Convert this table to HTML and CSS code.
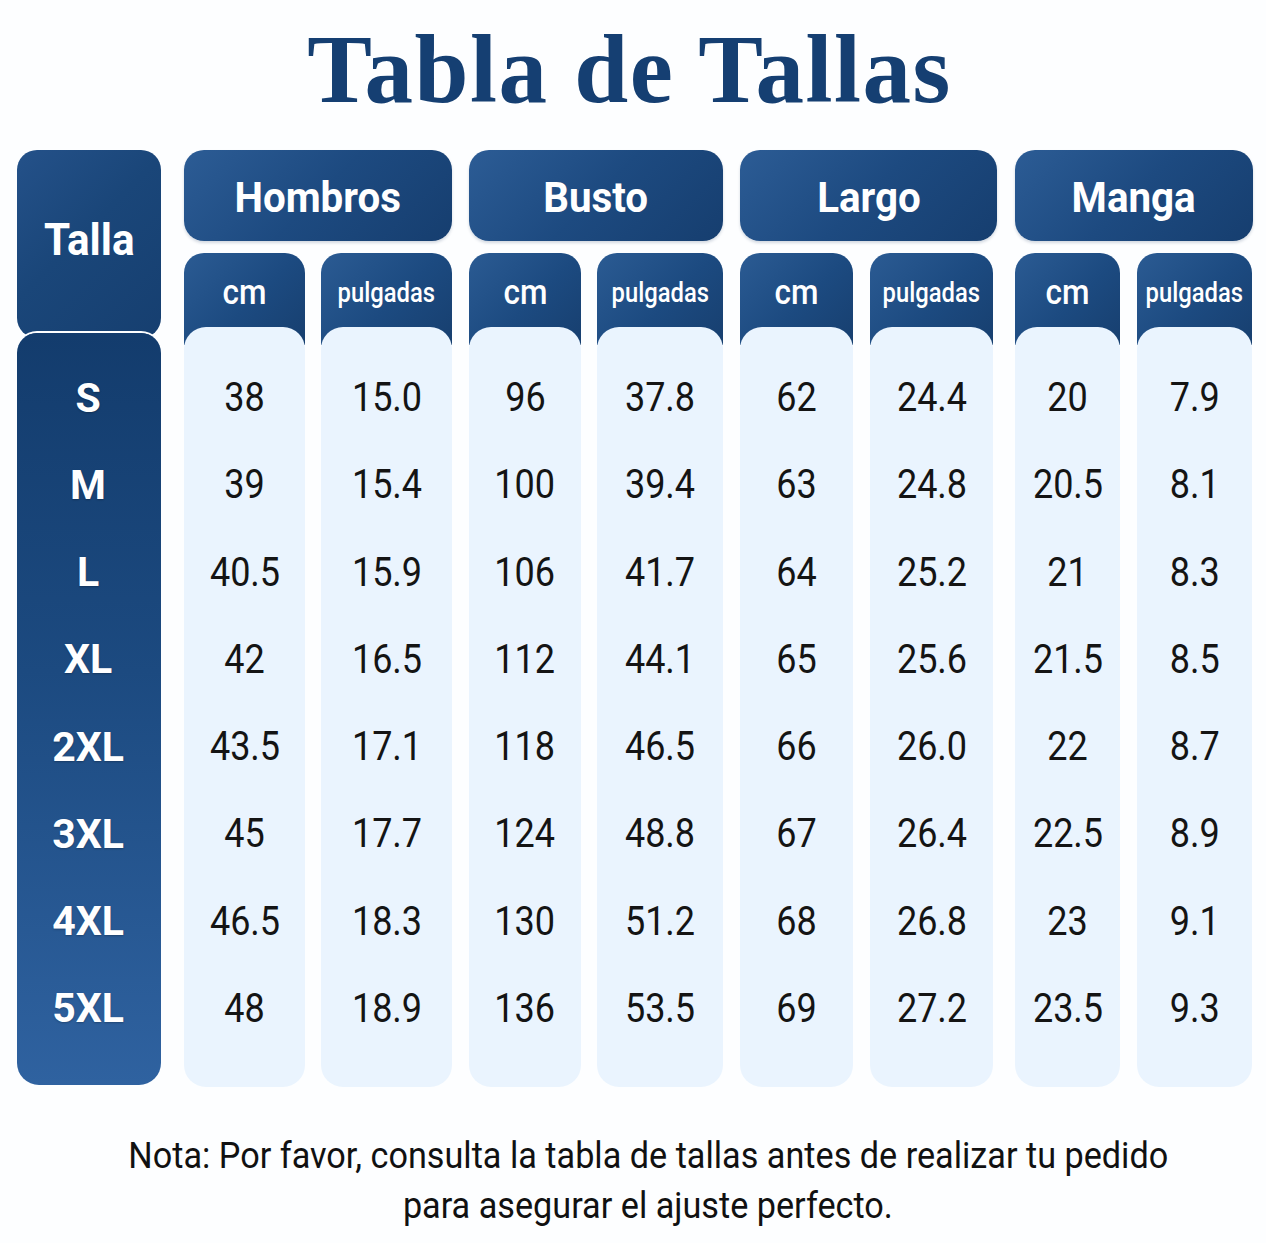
FILE: index.html
```html
<!DOCTYPE html>
<html lang="es">
<head>
<meta charset="utf-8">
<title>Tabla de Tallas</title>
<link rel="stylesheet" href="styles.css">
</head>
<body>
<div class="page">
  <h1 class="title">Tabla de Tallas</h1>
  <div class="chart">
    <div class="talla-col">
      <div class="talla-head"><span class="t sq">Talla</span></div>
      <div class="sizes">
        <div class="size">S</div>
        <div class="size">M</div>
        <div class="size">L</div>
        <div class="size">XL</div>
        <div class="size">2XL</div>
        <div class="size">3XL</div>
        <div class="size">4XL</div>
        <div class="size">5XL</div>
      </div>
    </div>

    <div class="group g-hombros">
      <div class="group-head"><span class="t sq">Hombros</span></div>
      <div class="subs">
        <div class="sub w-hc">
          <div class="sub-head"><span class="t cm">cm</span></div>
          <div class="sub-body">
            <div class="cell"><span class="t">38</span></div>
            <div class="cell"><span class="t">39</span></div>
            <div class="cell"><span class="t">40.5</span></div>
            <div class="cell"><span class="t">42</span></div>
            <div class="cell"><span class="t">43.5</span></div>
            <div class="cell"><span class="t">45</span></div>
            <div class="cell"><span class="t">46.5</span></div>
            <div class="cell"><span class="t">48</span></div>
          </div>
        </div>
        <div class="sub w-hp">
          <div class="sub-head"><span class="t pul">pulgadas</span></div>
          <div class="sub-body">
            <div class="cell"><span class="t">15.0</span></div>
            <div class="cell"><span class="t">15.4</span></div>
            <div class="cell"><span class="t">15.9</span></div>
            <div class="cell"><span class="t">16.5</span></div>
            <div class="cell"><span class="t">17.1</span></div>
            <div class="cell"><span class="t">17.7</span></div>
            <div class="cell"><span class="t">18.3</span></div>
            <div class="cell"><span class="t">18.9</span></div>
          </div>
        </div>
      </div>
    </div>

    <div class="group g-busto">
      <div class="group-head"><span class="t sq">Busto</span></div>
      <div class="subs">
        <div class="sub w-bc">
          <div class="sub-head"><span class="t cm">cm</span></div>
          <div class="sub-body">
            <div class="cell"><span class="t">96</span></div>
            <div class="cell"><span class="t">100</span></div>
            <div class="cell"><span class="t">106</span></div>
            <div class="cell"><span class="t">112</span></div>
            <div class="cell"><span class="t">118</span></div>
            <div class="cell"><span class="t">124</span></div>
            <div class="cell"><span class="t">130</span></div>
            <div class="cell"><span class="t">136</span></div>
          </div>
        </div>
        <div class="sub w-bp">
          <div class="sub-head"><span class="t pul">pulgadas</span></div>
          <div class="sub-body">
            <div class="cell"><span class="t">37.8</span></div>
            <div class="cell"><span class="t">39.4</span></div>
            <div class="cell"><span class="t">41.7</span></div>
            <div class="cell"><span class="t">44.1</span></div>
            <div class="cell"><span class="t">46.5</span></div>
            <div class="cell"><span class="t">48.8</span></div>
            <div class="cell"><span class="t">51.2</span></div>
            <div class="cell"><span class="t">53.5</span></div>
          </div>
        </div>
      </div>
    </div>

    <div class="group g-largo">
      <div class="group-head"><span class="t sq">Largo</span></div>
      <div class="subs">
        <div class="sub w-lc">
          <div class="sub-head"><span class="t cm">cm</span></div>
          <div class="sub-body">
            <div class="cell"><span class="t">62</span></div>
            <div class="cell"><span class="t">63</span></div>
            <div class="cell"><span class="t">64</span></div>
            <div class="cell"><span class="t">65</span></div>
            <div class="cell"><span class="t">66</span></div>
            <div class="cell"><span class="t">67</span></div>
            <div class="cell"><span class="t">68</span></div>
            <div class="cell"><span class="t">69</span></div>
          </div>
        </div>
        <div class="sub w-lp">
          <div class="sub-head"><span class="t pul">pulgadas</span></div>
          <div class="sub-body">
            <div class="cell"><span class="t">24.4</span></div>
            <div class="cell"><span class="t">24.8</span></div>
            <div class="cell"><span class="t">25.2</span></div>
            <div class="cell"><span class="t">25.6</span></div>
            <div class="cell"><span class="t">26.0</span></div>
            <div class="cell"><span class="t">26.4</span></div>
            <div class="cell"><span class="t">26.8</span></div>
            <div class="cell"><span class="t">27.2</span></div>
          </div>
        </div>
      </div>
    </div>

    <div class="group g-manga">
      <div class="group-head"><span class="t sq">Manga</span></div>
      <div class="subs">
        <div class="sub w-mc">
          <div class="sub-head"><span class="t cm">cm</span></div>
          <div class="sub-body">
            <div class="cell"><span class="t">20</span></div>
            <div class="cell"><span class="t">20.5</span></div>
            <div class="cell"><span class="t">21</span></div>
            <div class="cell"><span class="t">21.5</span></div>
            <div class="cell"><span class="t">22</span></div>
            <div class="cell"><span class="t">22.5</span></div>
            <div class="cell"><span class="t">23</span></div>
            <div class="cell"><span class="t">23.5</span></div>
          </div>
        </div>
        <div class="sub w-mp">
          <div class="sub-head"><span class="t pul">pulgadas</span></div>
          <div class="sub-body">
            <div class="cell"><span class="t">7.9</span></div>
            <div class="cell"><span class="t">8.1</span></div>
            <div class="cell"><span class="t">8.3</span></div>
            <div class="cell"><span class="t">8.5</span></div>
            <div class="cell"><span class="t">8.7</span></div>
            <div class="cell"><span class="t">8.9</span></div>
            <div class="cell"><span class="t">9.1</span></div>
            <div class="cell"><span class="t">9.3</span></div>
          </div>
        </div>
      </div>
    </div>
  </div>

  <p class="note"><span class="t">Nota: Por favor, consulta la tabla de tallas antes de realizar tu pedido</span><br><span class="t">para asegurar el ajuste perfecto.</span></p>
</div>
</body>
</html>
```

FILE: styles.css
```css
* { box-sizing: border-box; }

html, body {
  margin: 0;
  padding: 0;
  background: #fdfeff;
}

.page {
  width: 1266px;
  padding-top: 22px;
  font-family: Roboto, "Liberation Sans", sans-serif;
}

.title {
  margin: 0;
  padding-right: 7px;
  text-align: center;
  font-family: "Liberation Serif", "Times New Roman", serif;
  font-weight: 700;
  font-size: 97px;
  line-height: 95px;
  height: 95px;
  letter-spacing: 1.5px;
  color: #153f72;
}

.chart {
  display: flex;
  align-items: flex-start;
  margin-top: 33px;
  padding-left: 17px;
}

.t {
  display: inline-block;
  white-space: nowrap;
  transform: scaleX(0.9);
}

/* Talla column */
.talla-col {
  width: 144px;
  display: flex;
  flex-direction: column;
}

.talla-head {
  height: 188px;
  border-radius: 20px;
  background: linear-gradient(135deg, #245189 0%, #1a4679 45%, #163f70 100%);
  display: flex;
  align-items: center;
  justify-content: center;
  padding-bottom: 8px;
  color: #fff;
  font-weight: 700;
  font-size: 44px;
}

.sq { transform: scaleX(0.96); }

.sizes {
  margin-top: -5px;
  height: 752px;
  border-radius: 20px 20px 22px 22px;
  box-shadow: 0 0 0 2px #fdfeff;
  background: linear-gradient(180deg, #133c6d 0%, #1c4a80 45%, #2f62a0 100%);
  padding: 21px 0 33px;
}

.size {
  height: 87.25px;
  display: flex;
  align-items: center;
  justify-content: center;
  padding-right: 2px;
  color: #fff;
  font-weight: 700;
  font-size: 41px;
  text-shadow: 0 1px 2px rgba(0, 0, 0, 0.25);
}

/* Groups */
.group {
  display: flex;
  flex-direction: column;
  gap: 12px;
}

.g-hombros { width: 268px; margin-left: 23px; }
.g-busto { width: 254px; margin-left: 17px; }
.g-largo { width: 257px; margin-left: 17px; }
.g-manga { width: 238px; margin-left: 18px; }

.group-head {
  height: 91px;
  border-radius: 20px;
  background: linear-gradient(135deg, #2c5c95 0%, #1d4a80 50%, #163e6f 100%);
  box-shadow: 0 2px 3px rgba(20, 50, 90, 0.18);
  display: flex;
  align-items: center;
  justify-content: center;
  padding-top: 3px;
  color: #fff;
  font-weight: 700;
  font-size: 42px;
}

.subs {
  display: flex;
  gap: 16px;
}

.g-largo .subs,
.g-manga .subs { gap: 17px; }

.w-hc { width: 121px; }
.w-hp { width: 131px; }
.w-bc { width: 112px; }
.w-bp { width: 126px; }
.w-lc { width: 113px; }
.w-lp { width: 123px; }
.w-mc { width: 105px; }
.w-mp { width: 115px; }

.sub {
  display: flex;
  flex-direction: column;
  border-radius: 20px 20px 22px 22px;
  background: linear-gradient(135deg, #2b5b93 0%, #1c4a80 55%, #173f6f 100%) top / 100% 92px no-repeat;
}

.sub-head {
  height: 74px;
  display: flex;
  align-items: center;
  justify-content: center;
  padding-top: 5px;
  color: #fff;
  font-weight: 500;
}

.cm { font-size: 35px; }
.pul { font-size: 28px; transform: scaleX(0.85); }

.sub-body {
  height: 760px;
  border-radius: 22px;
  background: #eaf4fe;
  padding: 27px 0 35px;
}

.cell {
  height: 87.25px;
  display: flex;
  align-items: center;
  justify-content: center;
  color: #141414;
  font-size: 40px;
  font-weight: 400;
}

/* Note */
.note {
  margin: 44px 0 0;
  padding-left: 30px;
  text-align: center;
  font-size: 36px;
  line-height: 50px;
  color: #111;
}

.note .t { transform: scaleX(0.95); }
```
